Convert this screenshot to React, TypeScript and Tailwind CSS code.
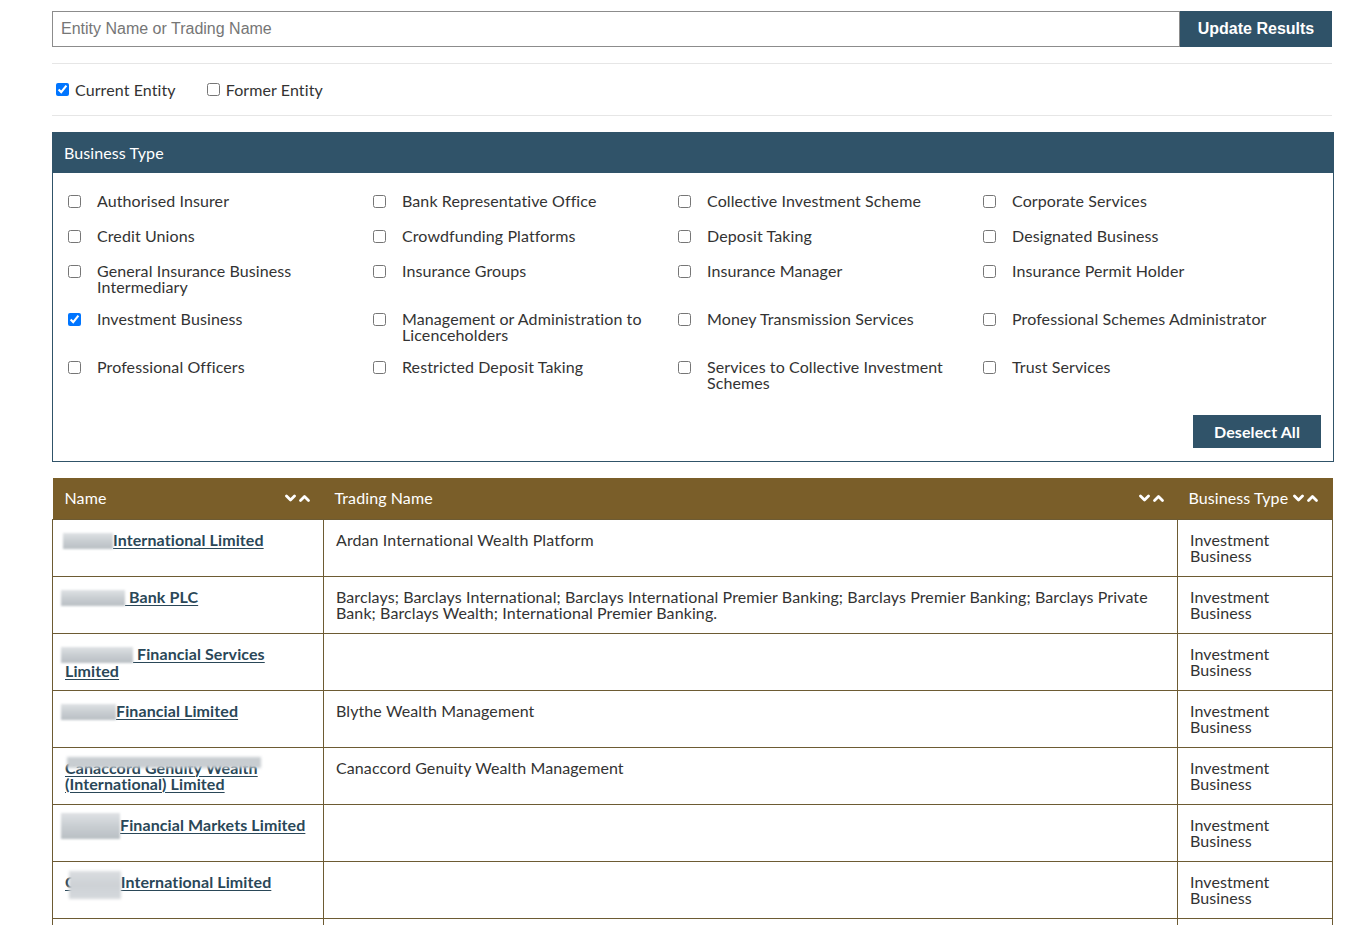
import React from "react";

const businessTypes: { label: string; checked?: boolean }[][] = [
  [
    { label: "Authorised Insurer" },
    { label: "Bank Representative Office" },
    { label: "Collective Investment Scheme" },
    { label: "Corporate Services" },
  ],
  [
    { label: "Credit Unions" },
    { label: "Crowdfunding Platforms" },
    { label: "Deposit Taking" },
    { label: "Designated Business" },
  ],
  [
    { label: "General Insurance Business Intermediary" },
    { label: "Insurance Groups" },
    { label: "Insurance Manager" },
    { label: "Insurance Permit Holder" },
  ],
  [
    { label: "Investment Business", checked: true },
    { label: "Management or Administration to Licenceholders" },
    { label: "Money Transmission Services" },
    { label: "Professional Schemes Administrator" },
  ],
  [
    { label: "Professional Officers" },
    { label: "Restricted Deposit Taking" },
    { label: "Services to Collective Investment Schemes" },
    { label: "Trust Services" },
  ],
];

function SortArrows() {
  return (
    <svg width="26" height="9" viewBox="0 0 26 9" className="shrink-0">
      <polyline points="1.5,2 5.5,6 9.5,2" fill="none" stroke="#fff" strokeWidth="2.8" strokeLinecap="round" strokeLinejoin="round" />
      <polyline points="15.5,6.5 19.5,2.5 23.5,6.5" fill="none" stroke="#fff" strokeWidth="2.8" strokeLinecap="round" strokeLinejoin="round" />
    </svg>
  );
}

function Smudge({ w, h = 16, className = "" }: { w: number; h?: number; className?: string }) {
  return (
    <span
      className={"inline-block align-middle blur-[1.2px] bg-gradient-to-b from-[#dfe2e5] via-[#c9ced2] to-[#b9bfc4] " + className}
      style={{ width: w, height: h }}
    />
  );
}

const linkCls = "font-bold text-[#2a4758] underline underline-offset-2 decoration-1";

type Row = { name: React.ReactNode; trading: string; type: string };

const rows: Row[] = [
  {
    name: (
      <span>
        <Smudge w={50} className="-ml-[2px]" />
        <span className={linkCls}>International Limited</span>
      </span>
    ),
    trading: "Ardan International Wealth Platform",
    type: "Investment Business",
  },
  {
    name: (
      <span>
        <Smudge w={64} className="-ml-[4px]" />
        <span className={linkCls}> Bank PLC</span>
      </span>
    ),
    trading:
      "Barclays; Barclays International; Barclays International Premier Banking; Barclays Premier Banking; Barclays Private Bank; Barclays Wealth; International Premier Banking.",
    type: "Investment Business",
  },
  {
    name: (
      <span>
        <Smudge w={72} className="-ml-[4px]" />
        <span className={linkCls}> Financial Services Limited</span>
      </span>
    ),
    trading: "",
    type: "Investment Business",
  },
  {
    name: (
      <span>
        <Smudge w={55} className="-ml-[4px]" />
        <span className={linkCls}>Financial Limited</span>
      </span>
    ),
    trading: "Blythe Wealth Management",
    type: "Investment Business",
  },
  {
    name: (
      <span className="relative block">
        <span className={linkCls}>Canaccord Genuity Wealth (International) Limited</span>
        <span className="absolute left-[2px] top-[-3px] w-[194px] h-[11px] blur-[1.5px] bg-[#c8cdd1]" />
      </span>
    ),
    trading: "Canaccord Genuity Wealth Management",
    type: "Investment Business",
  },
  {
    name: (
      <span>
        <Smudge w={59} h={26} className="-ml-[4px] -my-[5px]" />
        <span className={linkCls}>Financial Markets Limited</span>
      </span>
    ),
    trading: "",
    type: "Investment Business",
  },
  {
    name: (
      <span className="relative inline-block">
        <span className={linkCls}>C</span>
        <span className="inline-block w-[45px]" />
        <span className={linkCls}>International Limited</span>
        <span className="absolute left-[4px] top-[-3px] w-[52px] h-[28px] blur-[1.5px] bg-gradient-to-b from-[#dadde0] via-[#cdd1d5] to-[#d5d9dc]" />
      </span>
    ),
    trading: "",
    type: "Investment Business",
  },
  {
    name: null,
    trading: "",
    type: "",
  },
];

export default function App() {
  return (
    <div className="h-screen overflow-hidden bg-white font-['Lato','Noto_Sans',sans-serif] text-[16px] leading-[16px] tracking-[0.1px] text-[#333]">
      <div className="ml-[52px] w-[1280px] pt-[11px]">
        {/* search bar */}
        <div className="flex h-[36px]">
          <div className="flex-1 flex items-center border border-[#8c8c8c] pl-[8px] font-['Liberation_Sans',Arial,sans-serif] text-[16px] tracking-normal text-[#767676]">
            Entity Name or Trading Name
          </div>
          <button className="w-[152px] bg-[#2f5268] text-white font-bold font-['Liberation_Sans',Arial,sans-serif] tracking-normal text-[16px]">
            Update Results
          </button>
        </div>

        <div className="mt-[16px] border-t border-[#e6e6e6]" />

        {/* entity status */}
        <div className="flex h-[51px] items-center">
          <label className="flex items-center">
            <input type="checkbox" defaultChecked className="m-0 ml-[4px] w-[13px] h-[13px]" />
            <span className="ml-[6px]">Current Entity</span>
          </label>
          <label className="flex items-center ml-[31px]">
            <input type="checkbox" className="m-0 w-[13px] h-[13px]" />
            <span className="ml-[6px]">Former Entity</span>
          </label>
        </div>

        <div className="border-t border-[#e6e6e6]" />

        {/* business type filter */}
        <div className="mt-[16px] w-[1282px] border border-[#305369]">
          <div className="h-[41px] -mt-px -mx-px bg-[#305369] flex items-center pl-[12px] text-white">Business Type</div>
          <div className="pt-[20px] px-[12px] pb-[13px]">
            <div className="grid grid-cols-[repeat(4,305px)] gap-y-[16px]">
              {businessTypes.flat().map((t) => (
                <label key={t.label} className="flex items-start min-h-[19px]">
                  <input
                    type="checkbox"
                    defaultChecked={t.checked}
                    className="m-0 ml-[3px] mt-[2px] w-[13px] h-[13px] shrink-0"
                  />
                  <span className="ml-[16px] pr-[8px]">{t.label}</span>
                </label>
              ))}
            </div>
            <div className="flex justify-end mt-[24px]">
              <button className="w-[128px] h-[33px] bg-[#305369] text-white font-bold text-[16px]">Deselect All</button>
            </div>
          </div>
        </div>

        {/* results */}
        <table className="mt-[16px] w-[1280px] table-fixed border-collapse">
          <colgroup>
            <col className="w-[271px]" />
            <col className="w-[854px]" />
            <col className="w-[155px]" />
          </colgroup>
          <thead>
            <tr className="h-[41px] bg-[#7a5e29] text-white text-left">
              <th className="font-normal pl-[12px] pr-[13px]">
                <div className="flex items-center justify-between">
                  <span>Name</span>
                  <SortArrows />
                </div>
              </th>
              <th className="font-normal pl-[11px] pr-[13px]">
                <div className="flex items-center justify-between">
                  <span>Trading Name</span>
                  <SortArrows />
                </div>
              </th>
              <th className="font-normal pl-[11px] pr-[14px]">
                <div className="flex items-center justify-between">
                  <span>Business Type</span>
                  <SortArrows />
                </div>
              </th>
            </tr>
          </thead>
          <tbody>
            {rows.map((r, i) => (
              <tr key={i} className="h-[57px]">
                <td className="border border-[#6d5b33] align-top pt-[12px] pl-[12px] pr-[12px]">{r.name}</td>
                <td className="border border-[#6d5b33] align-top pt-[12px] pl-[12px] pr-[16px]">{r.trading}</td>
                <td className="border border-[#6d5b33] align-top pt-[12px] pl-[12px] pr-[12px]">{r.type}</td>
              </tr>
            ))}
          </tbody>
        </table>
      </div>
    </div>
  );
}
